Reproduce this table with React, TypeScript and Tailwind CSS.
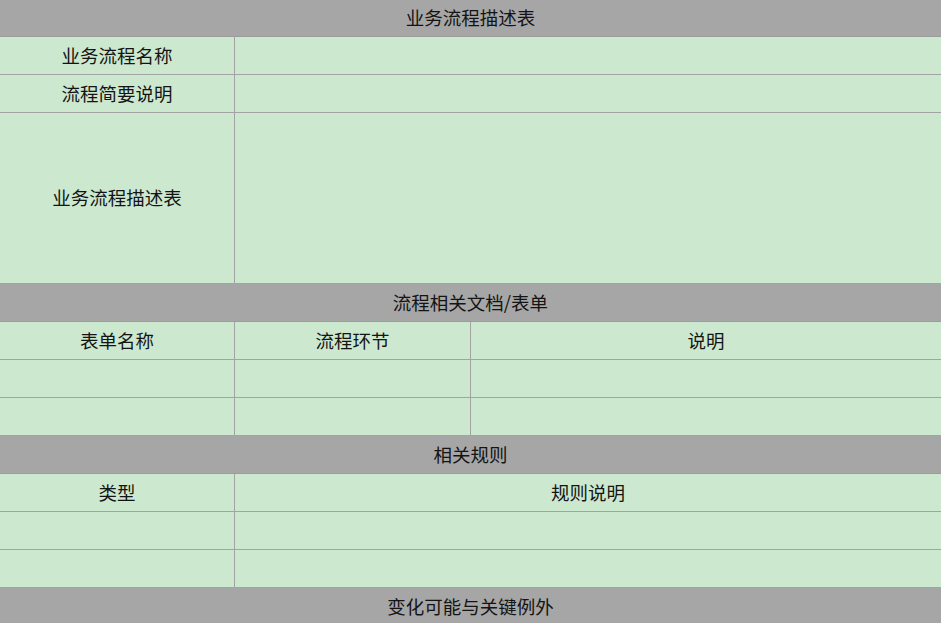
const font = "font-['Microsoft_YaHei','Noto_Sans_CJK_SC',sans-serif]";

function Header({ title, h = "h-[38px]" }: { title: string; h?: string }) {
  return (
    <div className={`flex ${h} items-center justify-center border-b border-[#9c9c9c] bg-[#a6a6a6]`}>
      {title}
    </div>
  );
}

function Row({ cells, h = "h-[38px]" }: { cells: { text?: string; w?: string }[]; h?: string }) {
  return (
    <div className={`flex ${h} border-b border-[#a3a3a3]`}>
      {cells.map((c, i) => (
        <div
          key={i}
          className={`flex items-center justify-center ${
            c.w ? `${c.w} shrink-0 border-r border-[#a3a3a3]` : "flex-1"
          }`}
        >
          {c.text}
        </div>
      ))}
    </div>
  );
}

export default function App() {
  return (
    <div className={`h-[623px] w-[941px] overflow-hidden bg-[#cce8cf] text-[18.5px] text-[#141414] ${font}`}>
      <Header title="业务流程描述表" h="h-[37px]" />
      <Row cells={[{ text: "业务流程名称", w: "w-[235px]" }, {}]} />
      <Row cells={[{ text: "流程简要说明", w: "w-[235px]" }, {}]} />
      <Row cells={[{ text: "业务流程描述表", w: "w-[235px]" }, {}]} h="h-[171px]" />
      <Header title="流程相关文档/表单" />
      <Row cells={[{ text: "表单名称", w: "w-[235px]" }, { text: "流程环节", w: "w-[236px]" }, { text: "说明" }]} />
      <Row cells={[{ w: "w-[235px]" }, { w: "w-[236px]" }, {}]} />
      <Row cells={[{ w: "w-[235px]" }, { w: "w-[236px]" }, {}]} />
      <Header title="相关规则" />
      <Row cells={[{ text: "类型", w: "w-[235px]" }, { text: "规则说明" }]} />
      <Row cells={[{ w: "w-[235px]" }, {}]} />
      <Row cells={[{ w: "w-[235px]" }, {}]} />
      <Header title="变化可能与关键例外" />
    </div>
  );
}
